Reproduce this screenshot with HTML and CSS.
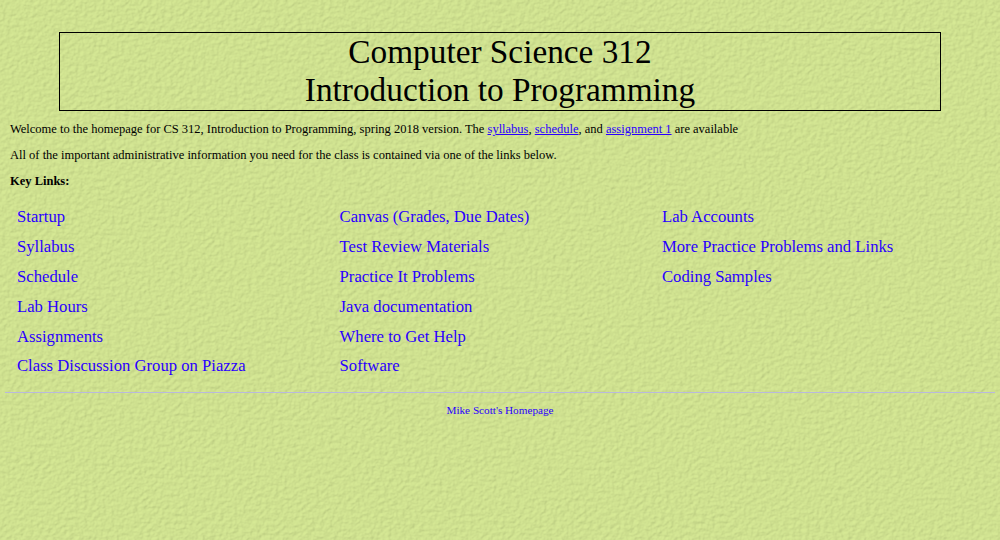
FILE: index.html
```html
<!DOCTYPE html>
<html lang="en">
<head>
  <meta charset="UTF-8">
  <meta name="viewport" content="width=device-width, initial-scale=1.0">
  <title>CS 312 Homepage</title>
  <link rel="stylesheet" href="styles.css">
</head>
<body>
  <!-- paper texture behind the page -->
  <svg class="texture" width="1000" height="540" aria-hidden="true">
    <filter id="paper" x="0" y="0" width="100%" height="100%">
      <feTurbulence type="fractalNoise" baseFrequency="0.22 0.26" numOctaves="3" seed="7" result="noise"/>
      <feDiffuseLighting in="noise" surfaceScale="0.7" diffuseConstant="1.07" lighting-color="#d2e492">
        <feDistantLight azimuth="225" elevation="65"/>
      </feDiffuseLighting>
    </filter>
    <rect width="1000" height="540" filter="url(#paper)"/>
  </svg>

  <div class="page">
    <h1 class="title">Computer Science 312<br>Introduction to Programming</h1>

    <p class="intro">Welcome to the homepage for CS 312, Introduction to Programming, spring 2018 version. The <a href="#">syllabus</a>, <a href="#">schedule</a>, and <a href="#">assignment 1</a> are available</p>
    <p class="intro">All of the important administrative information you need for the class is contained via one of the links below.</p>
    <p class="intro"><strong>Key Links:</strong></p>

    <div class="links">
      <a href="#">Startup</a>
      <a href="#">Canvas (Grades, Due Dates)</a>
      <a href="#">Lab Accounts</a>
      <a href="#">Syllabus</a>
      <a href="#">Test Review Materials</a>
      <a href="#">More Practice Problems and Links</a>
      <a href="#">Schedule</a>
      <a href="#">Practice It Problems</a>
      <a href="#">Coding Samples</a>
      <a href="#">Lab Hours</a>
      <a href="#">Java documentation</a>
      <span></span>
      <a href="#">Assignments</a>
      <a href="#">Where to Get Help</a>
      <span></span>
      <a href="#">Class Discussion Group on Piazza</a>
      <a href="#">Software</a>
      <span></span>
    </div>

    <hr class="rule">
    <p class="footer"><a href="#">Mike Scott's Homepage</a></p>
  </div>
</body>
</html>
```

FILE: styles.css
```css
html, body {
  margin: 0;
  height: 540px;
  overflow: hidden;
}
body {
  font-family: "Liberation Serif", "Times New Roman", serif;
  font-size: 12.5px;
  color: #000;
  background-color: #d2e492;
}
a {
  color: #2a00ff;
}
.texture {
  position: absolute;
  top: 0;
  left: 0;
}
.page {
  position: relative;
  padding: 32px 5px 0;
}
.title {
  width: 880px;
  margin: 0 auto;
  padding-bottom: 1px;
  border: 1px solid #000;
  font-size: 33.3px;
  font-weight: normal;
  line-height: 38px;
  text-align: center;
}
.intro {
  margin: 11px 0 0 5px;
  line-height: 15px;
}
.links {
  display: grid;
  grid-template-columns: 322.6px 322.4px 1fr;
  grid-auto-rows: 29.9px;
  margin: 13px 0 0 12px;
  font-size: 16.67px;
  line-height: 30px;
}
.links a {
  text-decoration: none;
}
.rule {
  height: 1px;
  margin: 10.5px 0 0;
  border: 0;
  background-color: #b9b9dc;
}
.footer {
  margin: 10px 0 0;
  font-size: 11.2px;
  line-height: 14px;
  text-align: center;
}
.footer a {
  text-decoration: none;
}
```
